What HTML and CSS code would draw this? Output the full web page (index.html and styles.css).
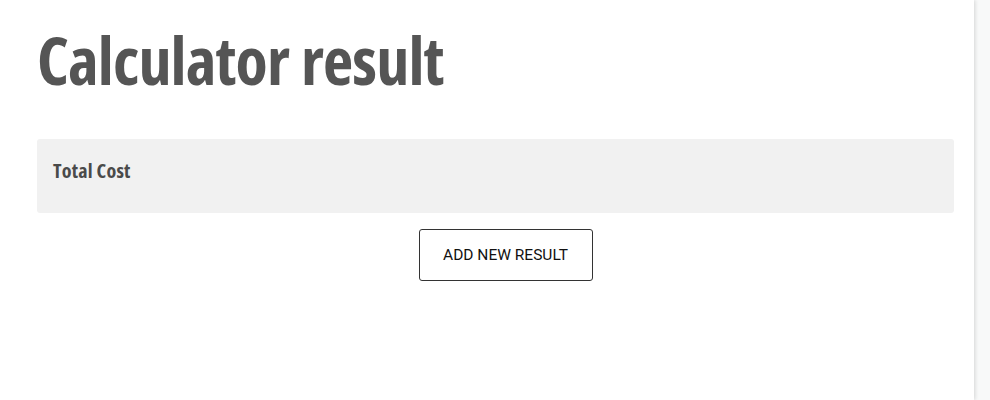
FILE: index.html
```
<!DOCTYPE html>
<html>

<head>
  <meta name="viewport" content="width=device-width, initial-scale=1">
  <link rel="stylesheet" href="styles.css">
</head>

<body>
  <div class="page">
    <section class="content">
      <h1 class="title">Calculator result</h1>

      <div class="result">
        <span class="label">Total Cost</span>
      </div>

      <div class="actions">
        <button class="btn">ADD NEW RESULT</button>
      </div>
    </section>
  </div>
</body>

</html>
```
FILE: styles.css
```
/* ----------App-Shell--------------- */
body {
  padding: 0px;
  margin: 0px;
  font-family: "Open Sans", Arial, sans-serif;
  background-color: #f8f9f9;
}

.page {
  width: 974px;
  min-height: 400px;
  background-color: #fff;
  box-shadow: 1px 0 4px rgba(0, 0, 0, 0.15);
}

.content {
  padding: 13px 20px 0 37px;
}

/* --------------components---------------------------- */
.title {
  margin: 0px;
  font-size: 66px;
  font-weight: 700;
  font-stretch: condensed;
  letter-spacing: -0.85px;
  word-spacing: 1px;
  color: #555;
  line-height: 92px;
}

.result {
  margin-top: 34px;
  background-color: #f1f1f1;
  border-radius: 3px;
  height: 74px;
  padding: 18px 16px 0 16px;
  box-sizing: border-box;
}

.label {
  font-size: 20px;
  font-weight: 700;
  font-stretch: condensed;
  letter-spacing: 0.2px;
  color: #4a4a4a;
}

.actions {
  display: flex;
  justify-content: center;
  margin-top: 16px;
  margin-right: -20px;
}

.btn {
  font-family: Roboto, Arial, sans-serif;
  font-size: 15.5px;
  color: #111;
  background: #fff;
  border: 1px solid #333;
  border-radius: 3px;
  width: 174px;
  height: 52px;
}
```
